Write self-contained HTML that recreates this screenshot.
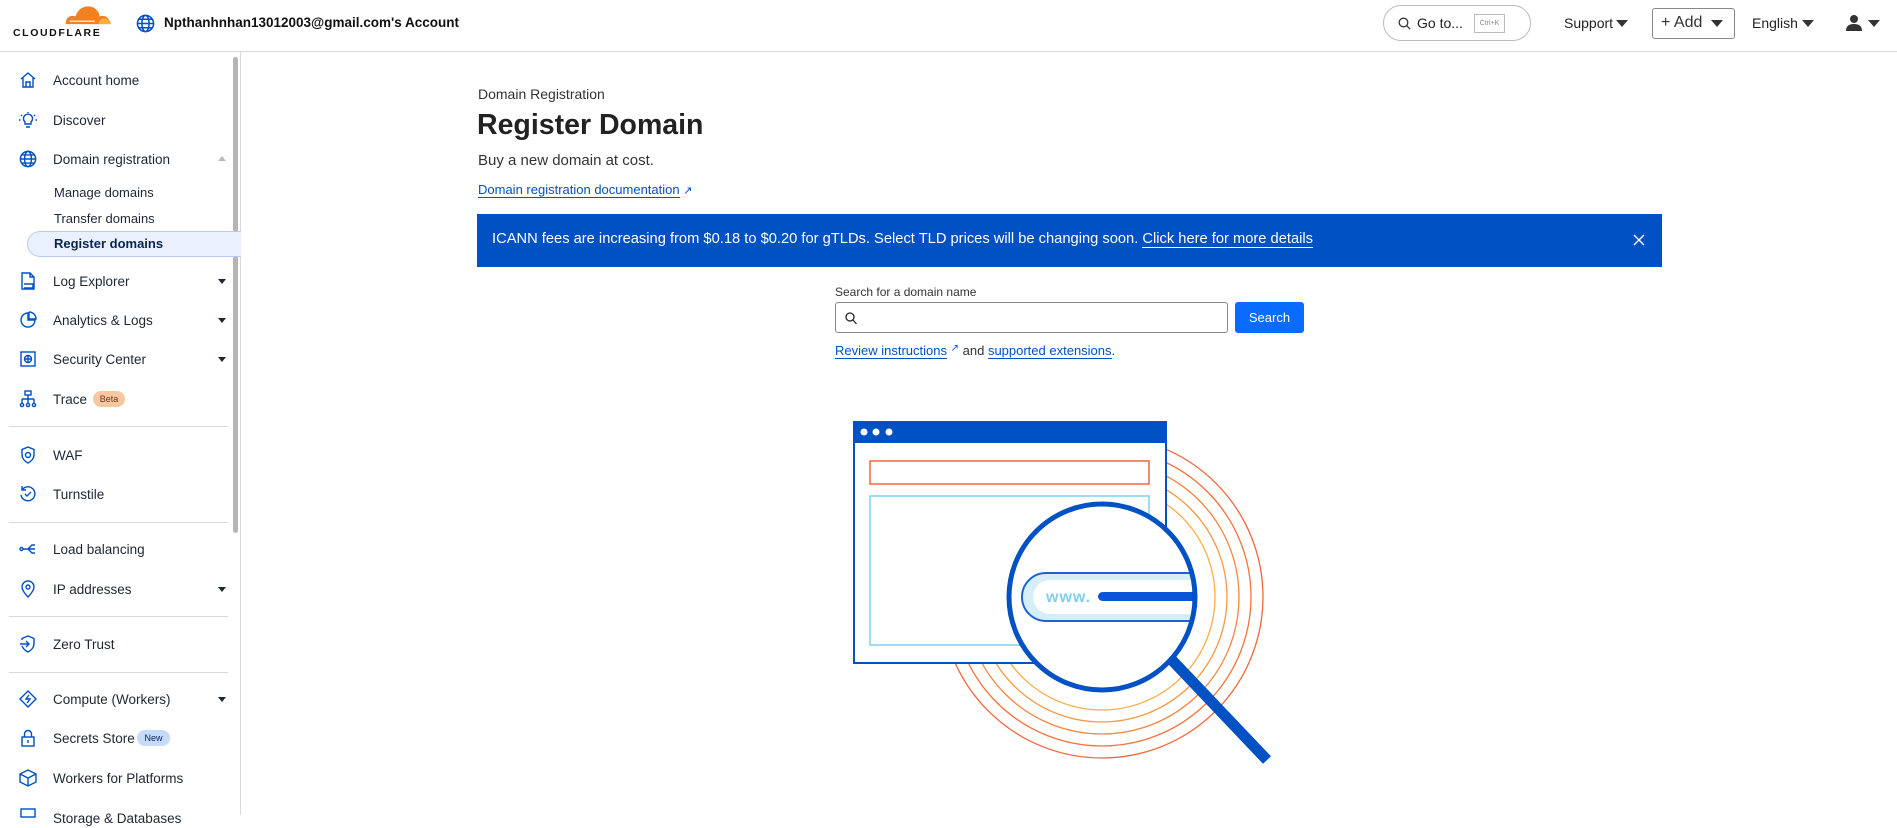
<!DOCTYPE html>
<html><head><meta charset="utf-8"><style>
*{box-sizing:border-box;margin:0;padding:0}
body{width:1897px;height:815px;overflow:hidden;background:#fff;font-family:"Liberation Sans",sans-serif;color:#313131;position:relative}
.abs{position:absolute}
.hdr{left:0;top:0;width:1897px;height:52px;border-bottom:1px solid #d9d9d9}
.side{left:0;top:52px;width:241px;height:763px;border-right:1px solid #d9d9d9}
.it{position:absolute;left:53px;font-size:13.5px;color:#1d2733;line-height:18px}
.ic{position:absolute;left:19px;width:18px;height:18px}
.car{position:absolute;left:218px;width:0;height:0;border-left:4px solid transparent;border-right:4px solid transparent;border-top:5px solid #1d2733}
.div{position:absolute;left:9px;width:219px;height:1px;background:#d9d9d9}
.sub{position:absolute;left:54px;font-size:13px;color:#1d2733}
a{color:#0051c3;text-decoration:none;border-bottom:1px solid #0051c3}
</style></head><body>
<div class="abs hdr"></div>
<!-- logo -->
<svg class="abs" style="left:62px;top:3px" width="52" height="23" viewBox="0 0 54 24">
<path d="M4 22 C3 15 9 12 14 14 C16 6 24 2 31 4 C36 6 39 10 39 14 C44 12 50 15 50 22 Z" fill="#f38020"/>
<path d="M38 22 C38 18 41 16 44 16 C48 16 51 19 51 22Z" fill="#faae40"/>
<path d="M8 19 H34" stroke="#fff" stroke-width="1.2"/>
</svg>
<div class="abs" style="left:13px;top:27px;font-size:10.5px;font-weight:bold;letter-spacing:1.6px;color:#111;line-height:12px">CLOUDFLARE</div>
<svg class="abs" style="left:136px;top:14px" width="19" height="19" viewBox="0 0 20 20" fill="none" stroke="#0051c3" stroke-width="1.6"><circle cx="10" cy="10" r="8.5"/><ellipse cx="10" cy="10" rx="3.8" ry="8.5"/><path d="M1.5 10h17M3 5.5h14M3 14.5h14"/></svg>
<div class="abs" style="left:164px;top:15px;font-size:13.5px;font-weight:600;color:#111">Npthanhnhan13012003@gmail.com's Account</div>
<div class="abs" style="left:1383px;top:5px;width:148px;height:36px;border:1px solid #bbb;border-radius:18px"></div>
<svg class="abs" style="left:1398px;top:17px" width="13" height="13" viewBox="0 0 13 13" fill="none" stroke="#333" stroke-width="1.3"><circle cx="5.5" cy="5.5" r="4.3"/><path d="M8.6 8.6l3.6 3.6"/></svg>
<div class="abs" style="left:1417px;top:15px;font-size:14px;color:#222">Go to...</div>
<div class="abs" style="left:1474px;top:14px;width:31px;height:19px;border:1px solid #bbb;font-size:7px;color:#888;text-align:center;line-height:17px">Ctrl+K</div>
<div class="abs" style="left:1564px;top:15px;font-size:14px;color:#222">Support</div>
<div class="car" style="left:1616px;top:20px;border-top-color:#333;border-left-width:6px;border-right-width:6px;border-top-width:7px"></div>
<div class="abs" style="left:1652px;top:8px;width:83px;height:31px;border:1px solid #888;border-radius:3px"></div>
<div class="abs" style="left:1661px;top:13px;font-size:16px;line-height:20px;color:#333">+ Add</div>
<div class="car" style="left:1711px;top:20px;border-top-color:#333;border-left-width:6px;border-right-width:6px;border-top-width:7px"></div>
<div class="abs" style="left:1752px;top:15px;font-size:14px;color:#222">English</div>
<div class="car" style="left:1802px;top:20px;border-top-color:#333;border-left-width:6px;border-right-width:6px;border-top-width:7px"></div>
<svg class="abs" style="left:1846px;top:14px" width="16" height="17" viewBox="0 0 16 17" fill="#333"><circle cx="8" cy="5" r="4"/><path d="M0 17c0-5 3-7 8-7s8 2 8 7z"/></svg>
<div class="car" style="left:1868px;top:20px;border-top-color:#333;border-left-width:6px;border-right-width:6px;border-top-width:7px"></div>

<!-- sidebar -->
<div class="abs side"></div>
<div class="abs" style="left:233px;top:57px;width:5px;height:476px;background:#b5b5b5;border-radius:3px"></div>
<svg class="ic" style="top:71px" viewBox="0 0 18 18" fill="none" stroke="#0051c3" stroke-width="1.4"><path d="M2 8L9 2l7 6M4 7v9h10V7M7 16v-5h4v5"/></svg><div class="it" style="top:72px">Account home</div>
<svg class="ic" style="top:111px" viewBox="0 0 18 18" fill="none" stroke="#0051c3" stroke-width="1.4"><path d="M6 11a4.5 4.5 0 1 1 6 0v2H6z M7 16h4M9 1v1M2 4l1 1M16 4l-1 1M0 9h1.5M16.5 9H18"/></svg><div class="it" style="top:112px">Discover</div>
<svg class="ic" style="top:150px" viewBox="0 0 20 20" fill="none" stroke="#0051c3" stroke-width="1.6"><circle cx="10" cy="10" r="8.5"/><ellipse cx="10" cy="10" rx="3.8" ry="8.5"/><path d="M1.5 10h17M3 5.5h14M3 14.5h14"/></svg><div class="it" style="top:151px">Domain registration</div>
<div class="car" style="top:156px;border-top:none;border-bottom:5px solid #bbb"></div>
<div class="sub" style="top:185px">Manage domains</div>
<div class="sub" style="top:211px">Transfer domains</div>
<div class="abs" style="left:27px;top:231px;width:214px;height:26px;background:#eaf1fd;border:1px solid #b7cdf0;border-right:none;border-radius:13px 0 0 13px"></div>
<div class="sub" style="top:236px;font-weight:bold;color:#0a2450">Register domains</div>
<svg class="ic" style="top:272px" viewBox="0 0 18 18" fill="none" stroke="#0051c3" stroke-width="1.4"><path d="M3 1h8l4 4v12H3zM11 1v4h4M5 12h9v4H5"/></svg><div class="it" style="top:273px">Log Explorer</div><div class="car" style="top:279px"></div>
<svg class="ic" style="top:311px" viewBox="0 0 18 18" fill="none" stroke="#0051c3" stroke-width="1.4"><path d="M9 2a7 7 0 1 0 7 7H9z M10 1v7h7a7 7 0 0 0-7-7"/></svg><div class="it" style="top:312px">Analytics &amp; Logs</div><div class="car" style="top:318px"></div>
<svg class="ic" style="top:350px" viewBox="0 0 18 18" fill="none" stroke="#0051c3" stroke-width="1.4"><rect x="2" y="2" width="14" height="14"/><circle cx="9" cy="9" r="3.5"/><path d="M9 5.5v7M5.5 9h7"/></svg><div class="it" style="top:351px">Security Center</div><div class="car" style="top:357px"></div>
<svg class="ic" style="top:390px" viewBox="0 0 18 18" fill="none" stroke="#0051c3" stroke-width="1.4"><rect x="6" y="1" width="6" height="4"/><path d="M9 5v4M3 9h12M3 9v4M9 9v4M15 9v4"/><circle cx="3" cy="15" r="1.6"/><circle cx="9" cy="15" r="1.6"/><circle cx="15" cy="15" r="1.6"/></svg><div class="it" style="top:391px">Trace</div>
<div class="abs" style="left:93px;top:391px;width:32px;height:16px;background:#f8c7a0;border-radius:8px;font-size:9px;text-align:center;line-height:16px;color:#6b3a12">Beta</div>
<div class="div" style="top:426px"></div>
<svg class="ic" style="top:446px" viewBox="0 0 18 18" fill="none" stroke="#0051c3" stroke-width="1.4"><path d="M9 1l6 2.5v5c0 4-3 7-6 8.5-3-1.5-6-4.5-6-8.5v-5z"/><circle cx="9" cy="9" r="2.5"/></svg><div class="it" style="top:447px">WAF</div>
<svg class="ic" style="top:485px" viewBox="0 0 18 18" fill="none" stroke="#0051c3" stroke-width="1.4"><path d="M3 5a7 7 0 1 1-1 5M3 1v4h4M6 9l2 2 4-4"/></svg><div class="it" style="top:486px">Turnstile</div>
<div class="div" style="top:522px"></div>
<svg class="ic" style="top:540px" viewBox="0 0 18 18" fill="none" stroke="#0051c3" stroke-width="1.4"><circle cx="2.5" cy="9" r="1.5"/><path d="M4 9h5M9 9l4-4h3M9 9l4 4h3M9 9h7"/></svg><div class="it" style="top:541px">Load balancing</div>
<svg class="ic" style="top:580px" viewBox="0 0 18 18" fill="none" stroke="#0051c3" stroke-width="1.4"><path d="M9 17s-6-6-6-10a6 6 0 0 1 12 0c0 4-6 10-6 10z"/><circle cx="9" cy="7" r="2"/></svg><div class="it" style="top:581px">IP addresses</div><div class="car" style="top:587px"></div>
<div class="div" style="top:616px"></div>
<svg class="ic" style="top:635px" viewBox="0 0 18 18" fill="none" stroke="#0051c3" stroke-width="1.4"><path d="M3 5V3.5L9 1l6 2.5v5c0 4-3 7-6 8.5-3-1.5-5-3.5-6-6M1 9h9M7 6l3 3-3 3"/></svg><div class="it" style="top:636px">Zero Trust</div>
<div class="div" style="top:672px"></div>
<svg class="ic" style="top:690px" viewBox="0 0 18 18" fill="none" stroke="#0051c3" stroke-width="1.4"><path d="M9 1l8 8-8 8-8-8zM10 5l-3 4h4l-3 4"/></svg><div class="it" style="top:691px">Compute (Workers)</div><div class="car" style="top:697px"></div>
<svg class="ic" style="top:729px" viewBox="0 0 18 18" fill="none" stroke="#0051c3" stroke-width="1.4"><rect x="3" y="8" width="12" height="9"/><path d="M5.5 8V5a3.5 3.5 0 0 1 7 0v3M9 11v3"/></svg><div class="it" style="top:730px">Secrets Store</div>
<div class="abs" style="left:137px;top:730px;width:33px;height:16px;background:#c6dafb;border-radius:8px;font-size:9px;text-align:center;line-height:16px;color:#0a2450">New</div>
<svg class="ic" style="top:769px" viewBox="0 0 18 18" fill="none" stroke="#0051c3" stroke-width="1.4"><path d="M9 1l8 4v8l-8 4-8-4V5zM1 5l8 4 8-4M9 9v8"/></svg><div class="it" style="top:770px">Workers for Platforms</div>
<svg class="ic" style="top:808px" viewBox="0 0 18 18" fill="none" stroke="#0051c3" stroke-width="1.4"><rect x="2" y="1" width="14" height="8"/></svg><div class="it" style="top:810px">Storage &amp; Databases</div>

<!-- main -->
<div class="abs" style="left:478px;top:86px;font-size:14px;color:#333">Domain Registration</div>
<div class="abs" style="left:477px;top:109px;font-size:28.5px;font-weight:600;color:#222">Register Domain</div>
<div class="abs" style="left:478px;top:152px;font-size:15px;color:#333">Buy a new domain at cost.</div>
<div class="abs" style="left:478px;top:182px;font-size:13px"><a>Domain registration documentation</a> <span style="color:#0051c3;font-size:11px">&#x2197;</span></div>
<div class="abs" style="left:477px;top:214px;width:1185px;height:53px;background:#0051c3"></div>
<div class="abs" style="left:492px;top:231px;font-size:14.7px;color:#fff">ICANN fees are increasing from $0.18 to $0.20 for gTLDs. Select TLD prices will be changing soon. <span style="border-bottom:1px solid #fff">Click here for more details</span></div>
<svg class="abs" style="left:1633px;top:234px" width="12" height="12" viewBox="0 0 12 12" stroke="#fff" stroke-width="1.4"><path d="M1 1l10 10M11 1L1 11"/></svg>
<div class="abs" style="left:835px;top:285px;font-size:12px;color:#333">Search for a domain name</div>
<div class="abs" style="left:835px;top:302px;width:393px;height:31px;border:1px solid #8a8a8a;border-radius:3px"></div>
<svg class="abs" style="left:845px;top:312px" width="12" height="13" viewBox="0 0 12 13" fill="none" stroke="#222" stroke-width="1.3"><circle cx="5" cy="5" r="4"/><path d="M8 8l3.5 4"/></svg>
<div class="abs" style="left:1235px;top:302px;width:69px;height:31px;background:#0a6cff;border-radius:3px;color:#fff;font-size:13px;text-align:center;line-height:31px">Search</div>
<div class="abs" style="left:835px;top:343px;font-size:13px;color:#333"><a>Review instructions</a> <span style="color:#0051c3;font-size:10px;vertical-align:top">&#x2197;</span> and <a>supported extensions</a>.</div>

<svg class="abs" style="left:0;top:0" width="1897" height="815">
<defs><clipPath id="lens"><circle cx="1102" cy="597" r="93"/></clipPath></defs>
<g fill="none" stroke-width="1.3">
<circle cx="1102" cy="597" r="161" stroke="#f4663a"/>
<circle cx="1102" cy="597" r="149" stroke="#f6733a"/>
<circle cx="1102" cy="597" r="137" stroke="#f7853d"/>
<circle cx="1102" cy="597" r="125" stroke="#f99841"/>
<circle cx="1102" cy="597" r="113" stroke="#fbad47"/>
</g>
<rect x="854" y="422" width="312" height="241" fill="#fff" stroke="#0051c3" stroke-width="2"/>
<rect x="853" y="421" width="314" height="22" fill="#0051c3"/>
<circle cx="864" cy="432" r="3.5" fill="#fff"/><circle cx="876" cy="432" r="3.5" fill="#fff"/><circle cx="889" cy="432" r="3.5" fill="#fff"/>
<rect x="870" y="461" width="279" height="23" fill="none" stroke="#f4663a" stroke-width="1.5"/>
<rect x="870" y="496" width="279" height="149" fill="none" stroke="#7fd0ea" stroke-width="1.5"/>
<circle cx="1102" cy="597" r="93" fill="#fff"/>
<g clip-path="url(#lens)">
<path d="M1220 573 H1046 a24 24 0 0 0 0 48 H1220" fill="#d6eef8" stroke="#1e63d6" stroke-width="2"/>
<path d="M1220 580 H1050 a17 17 0 0 0 0 34 H1220z" fill="#fff"/>
<rect x="1098" y="592" width="120" height="9" rx="4.5" fill="#0a55d6"/>
<text x="1046" y="602" font-family="Liberation Sans,sans-serif" font-weight="bold" font-size="16" fill="#7fd0ea" letter-spacing="1">www.</text>
</g>
<circle cx="1102" cy="597" r="93" fill="none" stroke="#0051c3" stroke-width="5"/>
<path d="M1170 658 L1267 760" stroke="#0051c3" stroke-width="11"/>
</svg>
</body></html>
